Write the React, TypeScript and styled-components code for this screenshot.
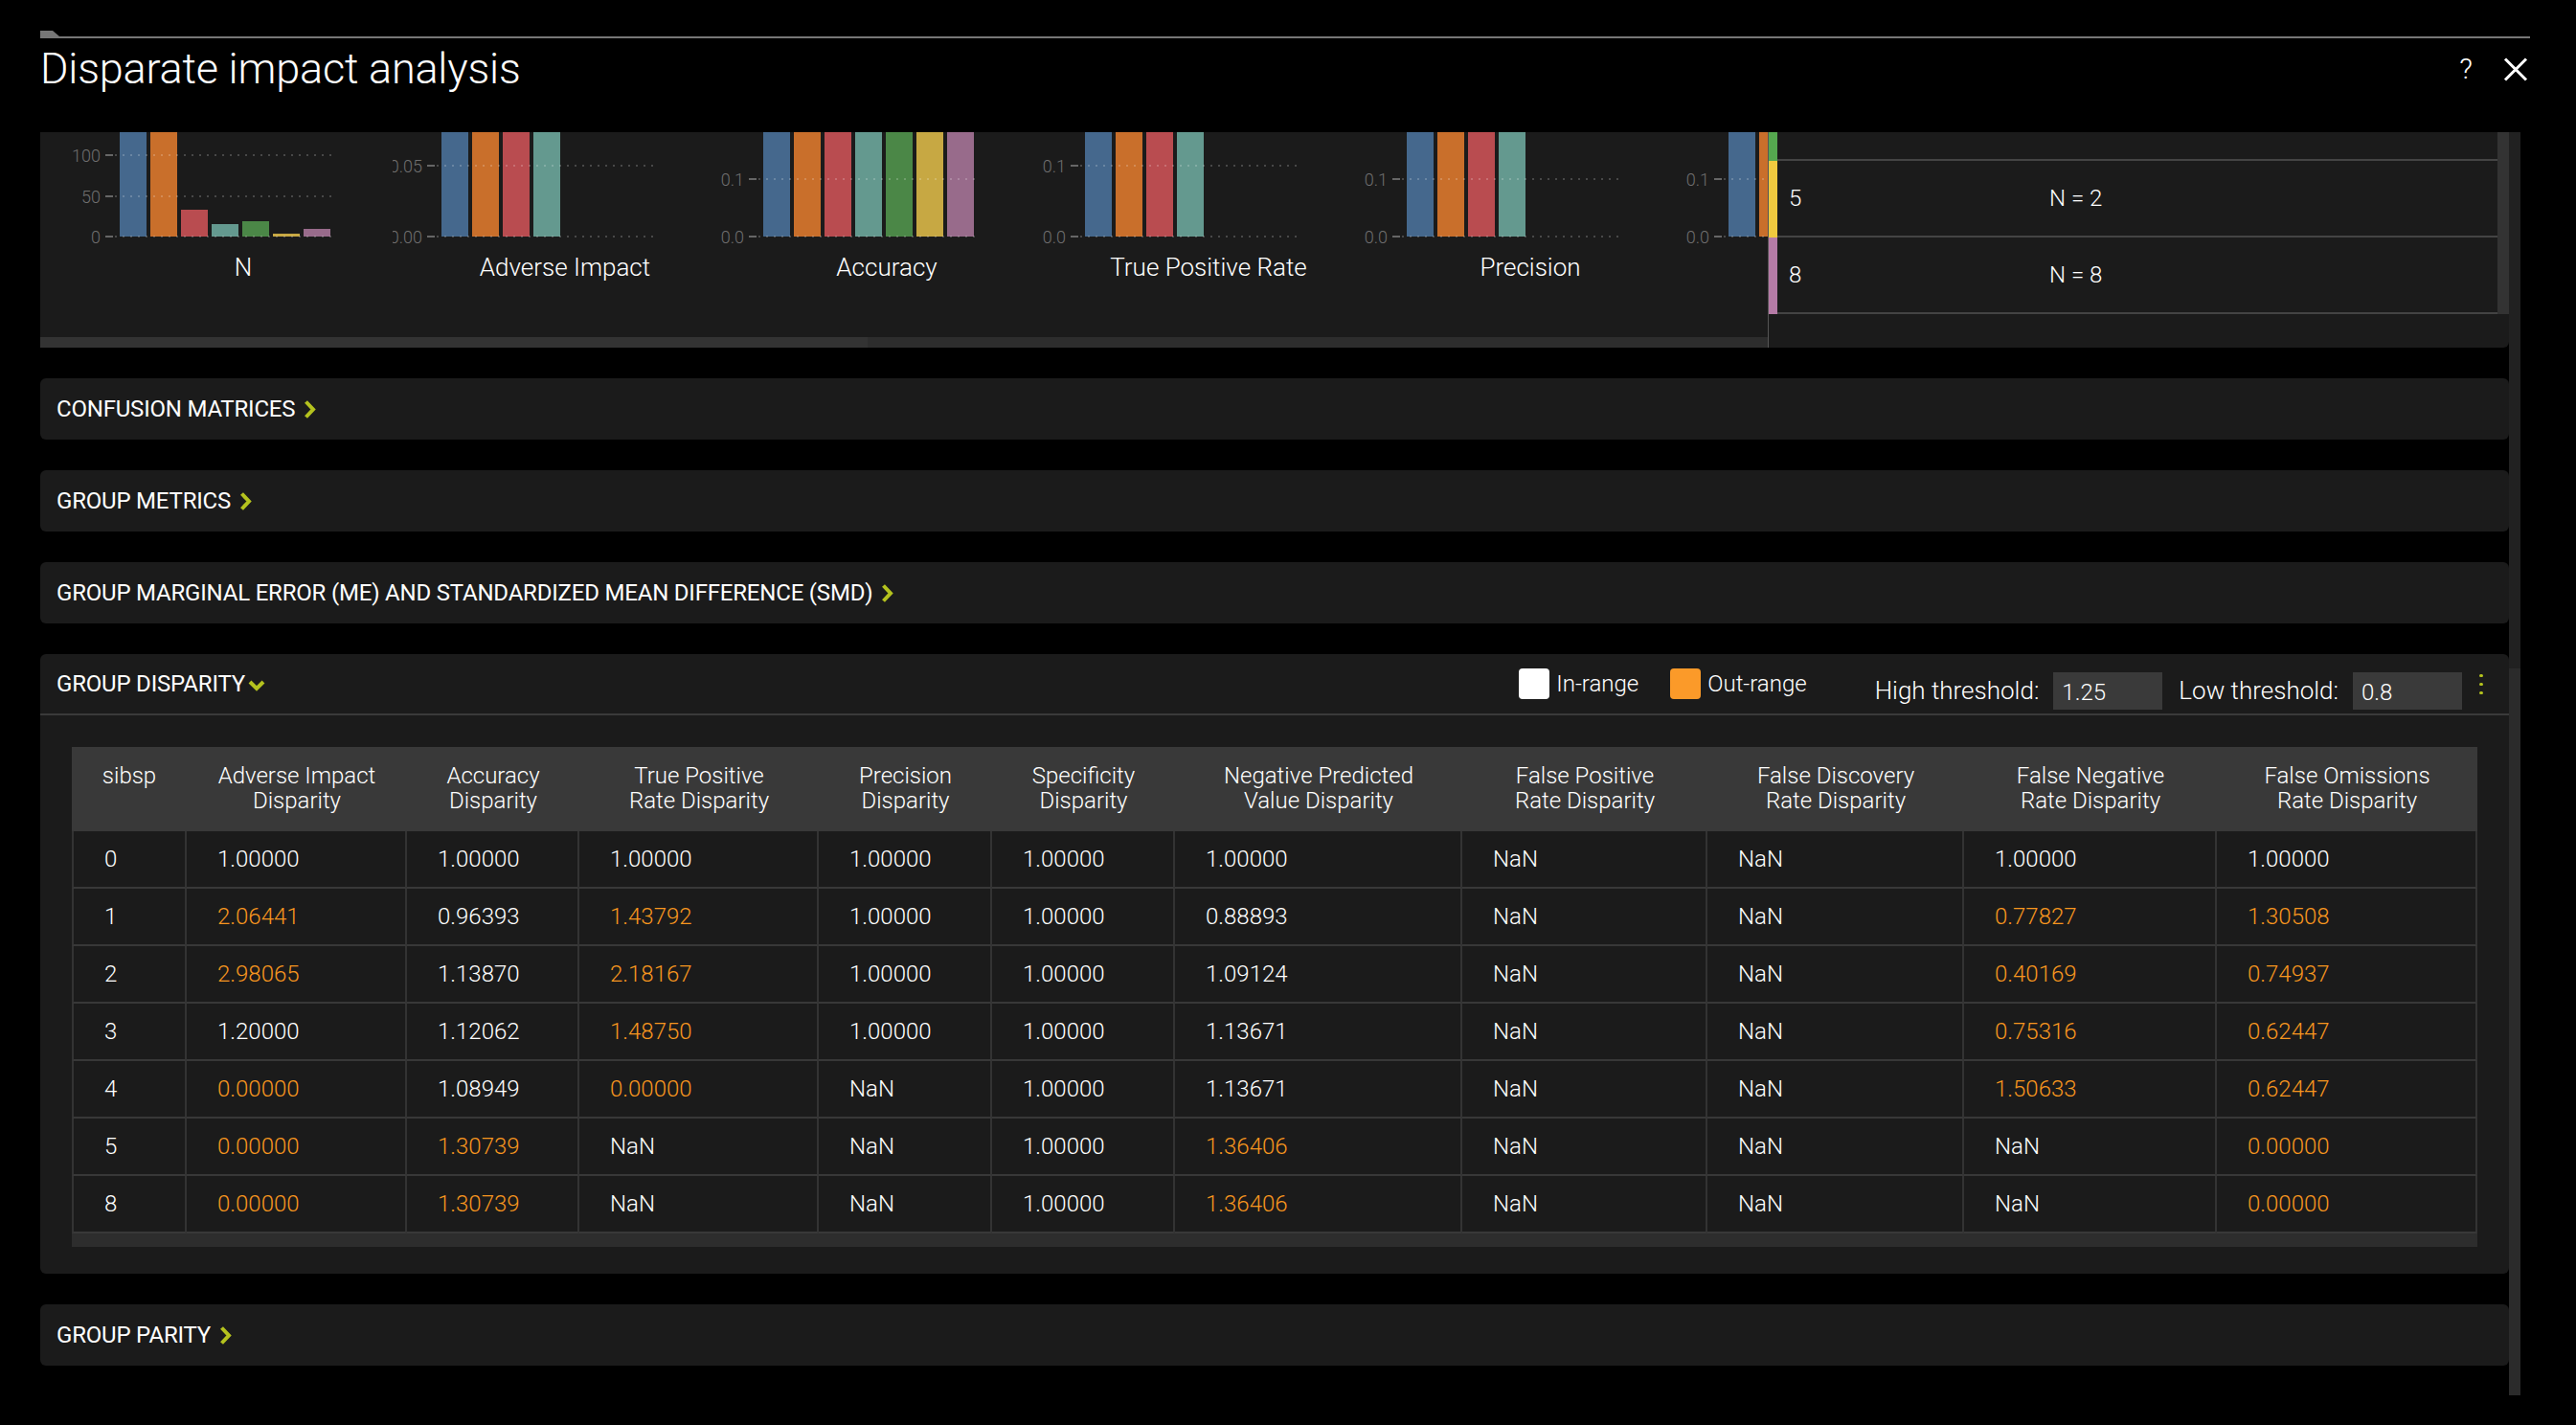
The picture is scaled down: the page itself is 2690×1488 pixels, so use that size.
import React from 'react';
import styled, { createGlobalStyle } from 'styled-components';

const GlobalStyle = createGlobalStyle`
  html, body {
    margin: 0;
    padding: 0;
    background: #000;
  }
  body {
    font-family: Roboto, 'Liberation Sans', sans-serif;
    color: #fff;
  }
  * {
    box-sizing: border-box;
  }
`;

const ACCENT = '#b4c21e';
const OUT = '#f7961f';

type Tick = { t: string; y: number };
type ChartCell = { label: string; ticks: Tick[]; bars: number[] };

const BAR_COLOURS = [
  '#45688d',
  '#c96f2b',
  '#b94c50',
  '#64998f',
  '#4b8747',
  '#c7a843',
  '#986b8b',
];

// bars: top y of each bar, 0 = clipped by the panel top
const charts: ChartCell[] = [
  {
    label: 'N',
    ticks: [
      { t: '100', y: 24 },
      { t: '50', y: 67 },
      { t: '0', y: 109 },
    ],
    bars: [0, 0, 81, 96, 93, 106, 101],
  },
  {
    label: 'Adverse Impact',
    ticks: [
      { t: '0.05', y: 35 },
      { t: '0.00', y: 109 },
    ],
    bars: [0, 0, 0, 0],
  },
  {
    label: 'Accuracy',
    ticks: [
      { t: '0.1', y: 49 },
      { t: '0.0', y: 109 },
    ],
    bars: [0, 0, 0, 0, 0, 0, 0],
  },
  {
    label: 'True Positive Rate',
    ticks: [
      { t: '0.1', y: 35 },
      { t: '0.0', y: 109 },
    ],
    bars: [0, 0, 0, 0],
  },
  {
    label: 'Precision',
    ticks: [
      { t: '0.1', y: 49 },
      { t: '0.0', y: 109 },
    ],
    bars: [0, 0, 0, 0],
  },
  {
    label: 'Specificity',
    ticks: [
      { t: '0.1', y: 49 },
      { t: '0.0', y: 109 },
    ],
    bars: [0, 0, 0, 0, 0, 0, 0],
  },
];

const legendRows = [
  { colour: '#55a84f', group: '', n: '', height: 28 },
  { colour: '#f0c93f', group: '5', n: 'N = 2', height: 78 },
  { colour: '#b57ba6', group: '8', n: 'N = 8', height: 78 },
];

const columns = [
  { title: 'sibsp', width: 120 },
  { title: 'Adverse Impact\nDisparity', width: 230 },
  { title: 'Accuracy\nDisparity', width: 180 },
  { title: 'True Positive\nRate Disparity', width: 250 },
  { title: 'Precision\nDisparity', width: 181 },
  { title: 'Specificity\nDisparity', width: 191 },
  { title: 'Negative Predicted\nValue Disparity', width: 300 },
  { title: 'False Positive\nRate Disparity', width: 256 },
  { title: 'False Discovery\nRate Disparity', width: 268 },
  { title: 'False Negative\nRate Disparity', width: 264 },
  { title: 'False Omissions\nRate Disparity', width: 272 },
];

const rows: string[][] = [
  ['0', '1.00000', '1.00000', '1.00000', '1.00000', '1.00000', '1.00000', 'NaN', 'NaN', '1.00000', '1.00000'],
  ['1', '2.06441', '0.96393', '1.43792', '1.00000', '1.00000', '0.88893', 'NaN', 'NaN', '0.77827', '1.30508'],
  ['2', '2.98065', '1.13870', '2.18167', '1.00000', '1.00000', '1.09124', 'NaN', 'NaN', '0.40169', '0.74937'],
  ['3', '1.20000', '1.12062', '1.48750', '1.00000', '1.00000', '1.13671', 'NaN', 'NaN', '0.75316', '0.62447'],
  ['4', '0.00000', '1.08949', '0.00000', 'NaN', '1.00000', '1.13671', 'NaN', 'NaN', '1.50633', '0.62447'],
  ['5', '0.00000', '1.30739', 'NaN', 'NaN', '1.00000', '1.36406', 'NaN', 'NaN', 'NaN', '0.00000'],
  ['8', '0.00000', '1.30739', 'NaN', 'NaN', '1.00000', '1.36406', 'NaN', 'NaN', 'NaN', '0.00000'],
];

const HIGH = 1.25;
const LOW = 0.8;

const isOutRange = (value: string) => {
  const v = parseFloat(value);
  if (isNaN(v)) return false;
  return v > HIGH || v < LOW;
};

const ChevronRight = () => (
  <svg width="13" height="19" viewBox="0 0 13 19">
    <polyline
      points="2.5,1.5 10,9.5 2.5,17.5"
      fill="none"
      stroke={ACCENT}
      strokeWidth="4"
    />
  </svg>
);

const ChevronDown = () => (
  <svg width="18" height="12" viewBox="0 0 18 12">
    <polyline
      points="2,2 9,9 16,2"
      fill="none"
      stroke={ACCENT}
      strokeWidth="4"
    />
  </svg>
);

const Chart: React.FC<{ cell: ChartCell }> = ({ cell }) => (
  <Cell>
    <Plot width="304" height="118" viewBox="0 0 304 118">
      {cell.bars.map((top, i) => (
        <rect
          key={i}
          x={51 + i * 32}
          y={top}
          width="28"
          height={109 - top}
          fill={BAR_COLOURS[i]}
        />
      ))}
      {cell.ticks.map(tick => (
        <g key={tick.t}>
          <text
            x="31"
            y={tick.y}
            textAnchor="end"
            dominantBaseline="central"
            fill="#6f6f6f"
            fontSize="18"
          >
            {tick.t}
          </text>
          <line x1="36" x2="44" y1={tick.y} y2={tick.y} stroke="#666" strokeWidth="2" />
          <line
            x1="46"
            x2="276"
            y1={tick.y}
            y2={tick.y}
            stroke="rgba(255,255,255,0.2)"
            strokeWidth="2"
            strokeDasharray="2 6"
          />
        </g>
      ))}
    </Plot>
    <ChartLabel>{cell.label}</ChartLabel>
  </Cell>
);

const Section: React.FC<{ title: string }> = ({ title }) => (
  <SectionBar>
    <SectionTitle>{title}</SectionTitle>
    <ChevronSlot>
      <ChevronRight />
    </ChevronSlot>
  </SectionBar>
);

const App: React.FC = () => {
  return (
    <>
      <GlobalStyle />
      <Page>
        <TopRule />
        <TitleRow>
          <Title>Disparate impact analysis</Title>
          <Actions>
            <Help>?</Help>
            <svg width="26" height="25" viewBox="0 0 26 25">
              <line x1="2" y1="1.5" x2="24" y2="23.5" stroke="#fff" strokeWidth="3" />
              <line x1="24" y1="1.5" x2="2" y2="23.5" stroke="#fff" strokeWidth="3" />
            </svg>
          </Actions>
        </TitleRow>
        <Body>
          <Content>
            <ChartStrip>
              <ChartScroller>
                <ChartRow>
                  {charts.map(c => (
                    <Chart key={c.label} cell={c} />
                  ))}
                </ChartRow>
                <HScroll $height={11}>
                  <HThumb $width={864} />
                </HScroll>
              </ChartScroller>
              <LegendPanel>
                <LegendBody>
                  <LegendList>
                    {legendRows.map((r, i) => (
                      <LegendRow key={i}>
                        <Strip $colour={r.colour} />
                        <LegendCells $height={r.height}>
                          <span>{r.group}</span>
                          <span>{r.n}</span>
                        </LegendCells>
                      </LegendRow>
                    ))}
                  </LegendList>
                  <VScroll />
                </LegendBody>
              </LegendPanel>
            </ChartStrip>

            <Section title="Confusion matrices" />
            <Section title="Group metrics" />
            <Section title="Group marginal error (ME) and standardized mean difference (SMD)" />

            <Panel>
              <PanelHeader>
                <SectionTitle>Group disparity</SectionTitle>
                <DownSlot>
                  <ChevronDown />
                </DownSlot>
                <Tools>
                  <Key>
                    <Swatch $colour="#fff" />
                    In-range
                  </Key>
                  <Key>
                    <Swatch $colour="#fb9a29" />
                    Out-range
                  </Key>
                  <Thresholds>
                    <ThresholdLabel>High threshold:</ThresholdLabel>
                    <ThresholdInput defaultValue="1.25" />
                    <ThresholdLabel>Low threshold:</ThresholdLabel>
                    <ThresholdInput defaultValue="0.8" />
                  </Thresholds>
                  <Kebab width="6" height="24" viewBox="0 0 6 24">
                    <rect x="1" y="2" width="4" height="3" rx="1.5" fill={ACCENT} />
                    <rect x="1" y="11" width="4" height="3" rx="1.5" fill={ACCENT} />
                    <rect x="1" y="20" width="4" height="3" rx="1.5" fill={ACCENT} />
                  </Kebab>
                </Tools>
              </PanelHeader>
              <PanelBody>
                <TableFrame>
                  <Table>
                    <colgroup>
                      {columns.map(c => (
                        <col key={c.title} style={{ width: c.width }} />
                      ))}
                    </colgroup>
                    <thead>
                      <tr>
                        {columns.map(c => (
                          <Th key={c.title}>{c.title}</Th>
                        ))}
                      </tr>
                    </thead>
                    <tbody>
                      {rows.map(r => (
                        <tr key={r[0]}>
                          {r.map((v, i) => (
                            <Td key={i} $out={i > 0 && isOutRange(v)}>
                              {v}
                            </Td>
                          ))}
                        </tr>
                      ))}
                    </tbody>
                  </Table>
                  <HScroll $height={14} />
                </TableFrame>
              </PanelBody>
            </Panel>

            <Section title="Group parity" />
          </Content>
          <PageScroll>
            <ScrollTrack />
            <ScrollThumb />
          </PageScroll>
        </Body>
      </Page>
    </>
  );
};

const Page = styled.div`
  width: 2690px;
  height: 1488px;
  overflow: hidden;
  background: #000;
  padding: 32px 48px 0 42px;
  display: flex;
  flex-direction: column;
`;

const TopRule = styled.div`
  height: 8px;
  border-bottom: 2px solid #777;
  &::before {
    content: '';
    display: block;
    width: 20px;
    height: 6px;
    background: #777;
    clip-path: polygon(0 0, 13px 0, 20px 100%, 0 100%);
  }
`;

const TitleRow = styled.div`
  height: 98px;
  padding-top: 8px;
  display: flex;
  justify-content: space-between;
  align-items: flex-start;
`;

const Title = styled.h1`
  margin: 0;
  font-size: 45px;
  line-height: 48px;
  font-weight: 300;
  letter-spacing: -0.2px;
`;

const Actions = styled.div`
  height: 48px;
  display: flex;
  align-items: center;
  gap: 32px;
  margin-right: 2px;
`;

const Help = styled.span`
  font-size: 30px;
  font-weight: 300;
  line-height: 30px;
`;

const Body = styled.div`
  display: flex;
  align-items: flex-start;
`;

const Content = styled.div`
  width: 2578px;
  flex-shrink: 0;
  display: flex;
  flex-direction: column;
  gap: 32px;
`;

const PageScroll = styled.div`
  width: 12px;
  height: 1319px;
  display: flex;
  flex-direction: column;
`;

const ScrollTrack = styled.div`
  height: 560px;
  background: #212121;
`;

const ScrollThumb = styled.div`
  flex: 1;
  background: #2b2b2b;
`;

const ChartStrip = styled.div`
  height: 225px;
  display: flex;
`;

const ChartScroller = styled.div`
  width: 1804px;
  flex-shrink: 0;
  background: #1b1b1b;
  display: flex;
  flex-direction: column;
  overflow: hidden;
`;

const ChartRow = styled.div`
  flex: 1;
  display: flex;
  overflow: hidden;
`;

const Cell = styled.div`
  width: 336px;
  flex-shrink: 0;
  display: flex;
  flex-direction: column;
`;

const Plot = styled.svg`
  display: block;
  margin-left: 32px;
  overflow: hidden;
  font-family: Roboto, 'Liberation Sans', sans-serif;
  font-weight: 300;
`;

const ChartLabel = styled.div`
  margin-top: 8px;
  padding-left: 88px;
  text-align: center;
  font-size: 26px;
  line-height: 30px;
  font-weight: 300;
  white-space: nowrap;
`;

const HScroll = styled.div<{ $height: number }>`
  height: ${p => p.$height}px;
  flex-shrink: 0;
  background: #2d2d2d;
  display: flex;
`;

const HThumb = styled.div<{ $width: number }>`
  width: ${p => p.$width}px;
  background: #333;
`;

const LegendPanel = styled.div`
  flex: 1;
  background: #1b1b1b;
  border-left: 1px solid #555;
  border-bottom-right-radius: 6px;
`;

const LegendBody = styled.div`
  height: 190px;
  display: flex;
`;

const LegendList = styled.div`
  flex: 1;
  display: flex;
  flex-direction: column;
`;

const LegendRow = styled.div`
  display: flex;
`;

const Strip = styled.div<{ $colour: string }>`
  width: 9px;
  flex-shrink: 0;
  background: ${p => p.$colour};
`;

const LegendCells = styled.div<{ $height: number }>`
  flex: 1;
  height: ${p => p.$height + 2}px;
  border-bottom: 2px solid #444;
  display: grid;
  grid-template-columns: 272px 1fr;
  align-items: center;
  padding-left: 12px;
  font-size: 24px;
  font-weight: 300;
`;

const VScroll = styled.div`
  width: 12px;
  background: #333;
`;

const SectionBar = styled.div`
  height: 64px;
  background: #1b1b1b;
  border-radius: 6px;
  padding-left: 17px;
  display: flex;
  align-items: center;
`;

const SectionTitle = styled.span`
  font-size: 24px;
  font-weight: 400;
  text-transform: uppercase;
  letter-spacing: -0.2px;
  white-space: nowrap;
`;

const ChevronSlot = styled.span`
  display: flex;
  margin-left: 9px;
`;

const DownSlot = styled.span`
  display: flex;
  margin-left: 3px;
  margin-top: 4px;
`;

const Panel = styled.div`
  background: #1b1b1b;
  border-radius: 6px;
`;

const PanelHeader = styled.div`
  height: 64px;
  border-bottom: 2px solid #3a3a3a;
  padding-left: 17px;
  padding-right: 26px;
  display: flex;
  align-items: center;
`;

const Tools = styled.div`
  margin-left: auto;
  display: flex;
  align-items: center;
`;

const Key = styled.div`
  display: flex;
  align-items: center;
  font-size: 24px;
  font-weight: 300;
  margin-right: 33px;
  &:last-of-type {
    margin-right: 0;
  }
`;

const Swatch = styled.span<{ $colour: string }>`
  width: 32px;
  height: 32px;
  border-radius: 4px;
  background: ${p => p.$colour};
  margin-right: 7px;
`;

const Thresholds = styled.div`
  display: flex;
  align-items: center;
  margin-left: 38px;
  margin-top: 14px;
  gap: 15px;
`;

const ThresholdLabel = styled.label`
  font-size: 26px;
  font-weight: 300;
  white-space: nowrap;
  & + input + & {
    margin-left: 2px;
  }
`;

const ThresholdInput = styled.input`
  width: 114px;
  height: 39px;
  border: none;
  outline: none;
  background: #3a3a3a;
  color: #fff;
  font-family: Roboto, 'Liberation Sans', sans-serif;
  font-size: 24px;
  font-weight: 300;
  padding: 4px 0 0 9px;
`;

const Kebab = styled.svg`
  margin-left: 17px;
`;

const PanelBody = styled.div`
  padding: 33px 32px 28px 33px;
`;

const TableFrame = styled.div`
  width: 2512px;
  display: flex;
  flex-direction: column;
`;

const Table = styled.table`
  width: 2512px;
  table-layout: fixed;
  border-collapse: separate;
  border-spacing: 0;
  font-family: Roboto, 'Liberation Sans', sans-serif;
`;

const Th = styled.th`
  background: #393939;
  height: 88px;
  padding: 17px 6px 0;
  vertical-align: top;
  text-align: center;
  white-space: pre-line;
  font-size: 24px;
  line-height: 26px;
  font-weight: 300;
  color: #fff;
`;

const Td = styled.td<{ $out: boolean }>`
  padding: 0 0 0 32px;
  line-height: 58px;
  font-size: 24px;
  font-weight: 300;
  color: ${p => (p.$out ? OUT : '#fff')};
  border-right: 2px solid #333;
  border-bottom: 2px solid #383838;
  white-space: nowrap;
  &:first-child {
    border-left: 2px solid #333;
  }
`;

export default App;
